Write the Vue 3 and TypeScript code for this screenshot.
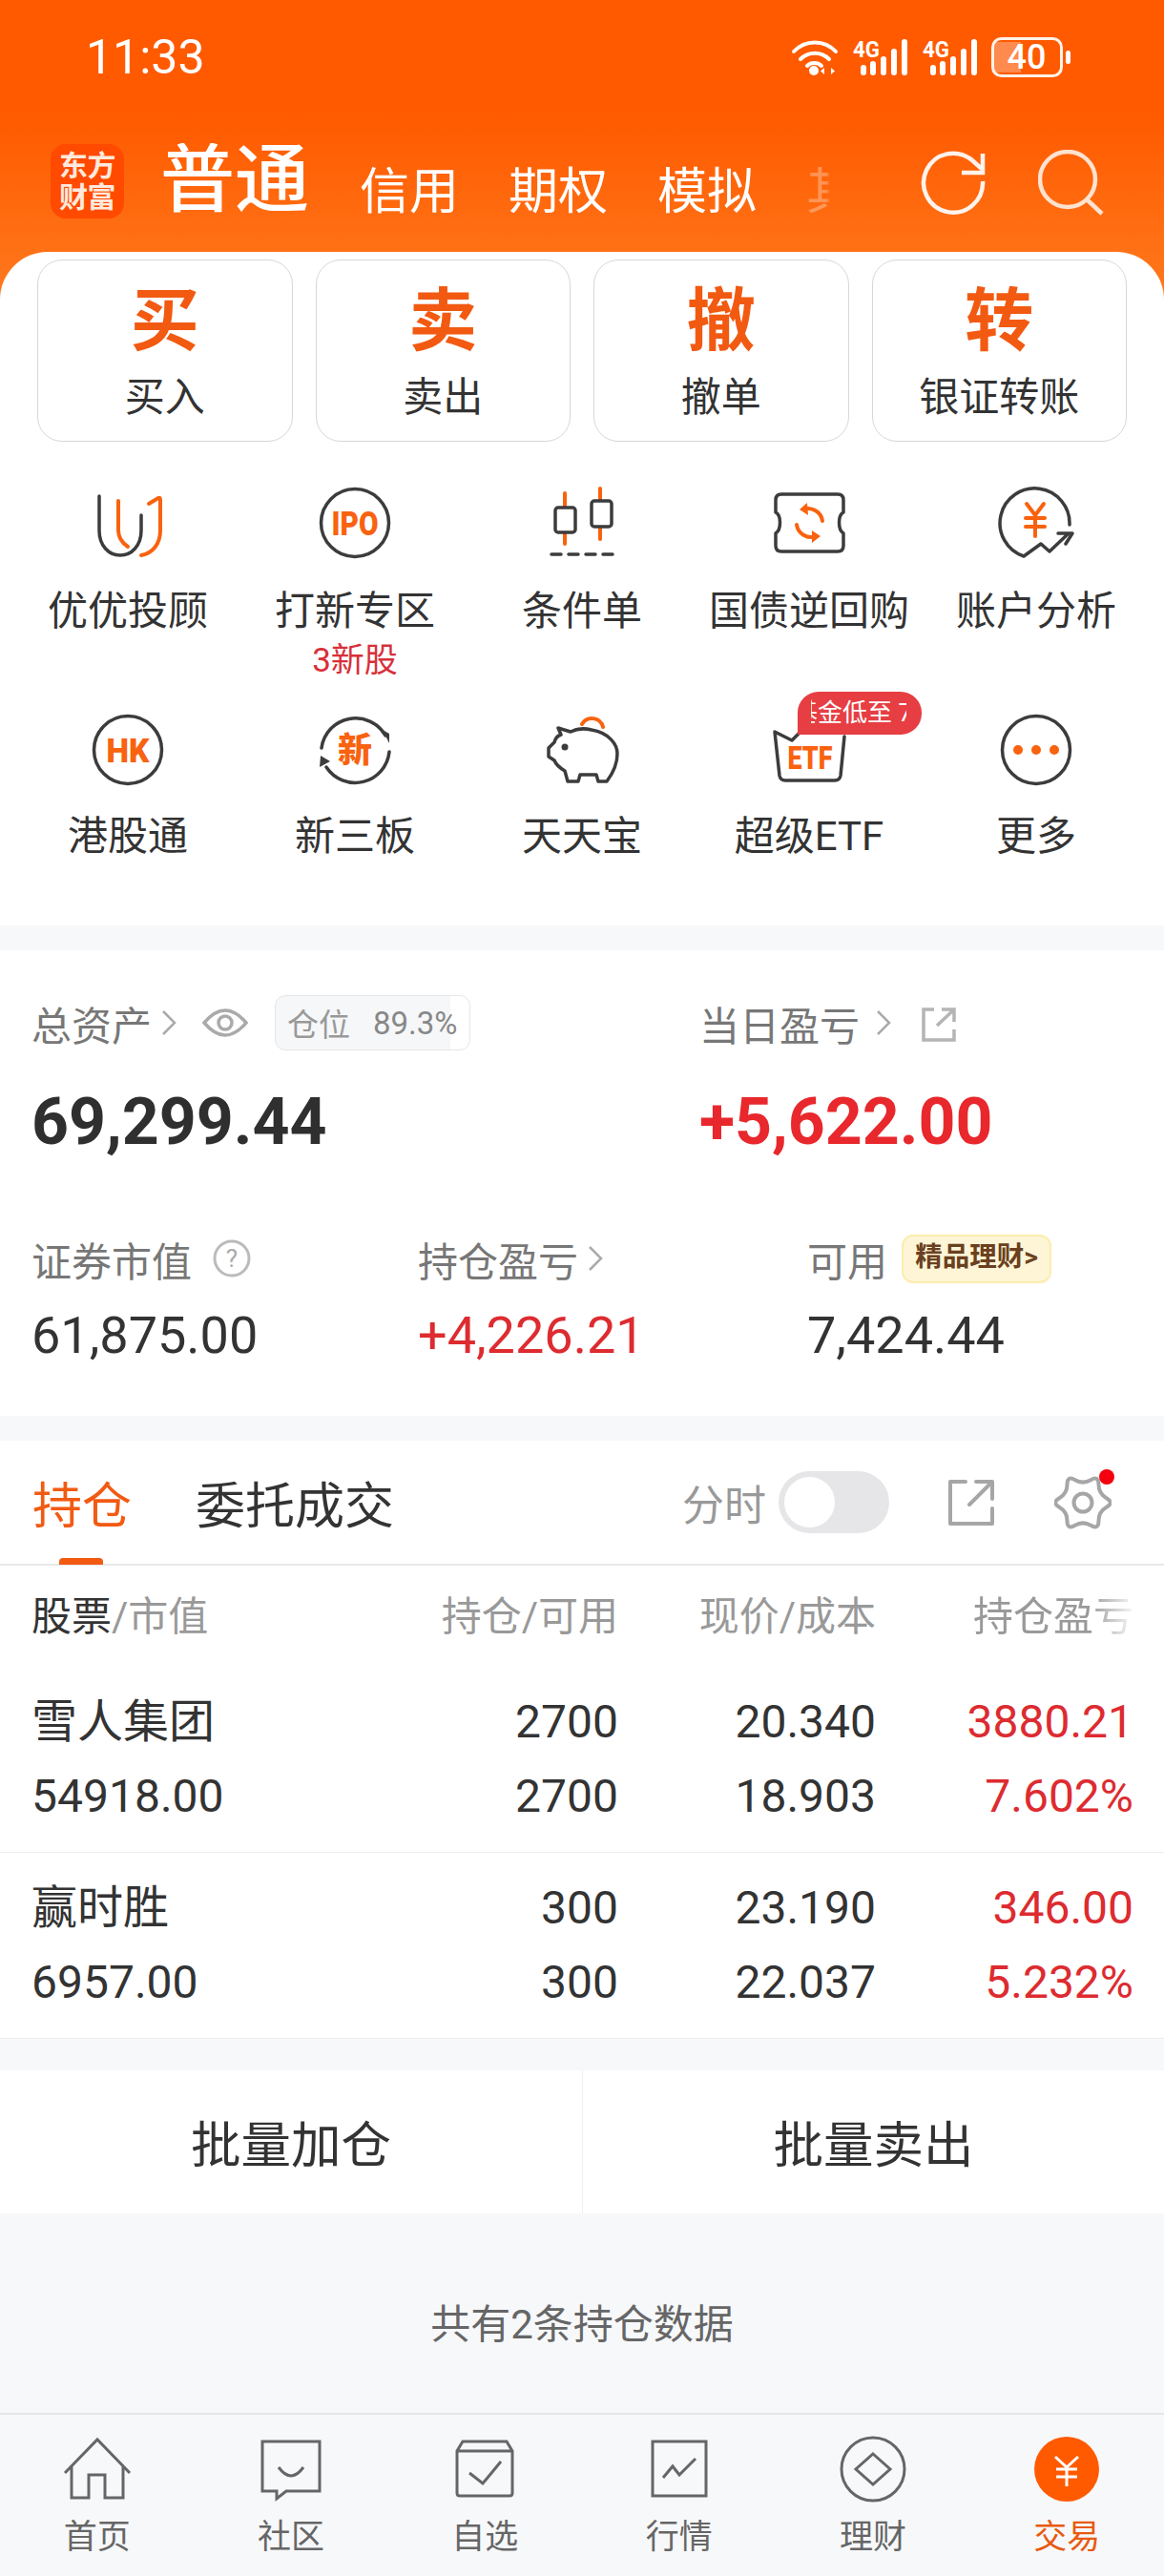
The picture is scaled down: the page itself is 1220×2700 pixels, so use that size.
<script setup lang="ts">
const actions = [
  { big: '买', label: '买入' },
  { big: '卖', label: '卖出' },
  { big: '撤', label: '撤单' },
  { big: '转', label: '银证转账' },
]
const tabs = ['信用', '期权', '模拟', '其他']
const rows = [
  { name: '雪人集团', value: '54918.00', hold: '2700', avail: '2700', price: '20.340', cost: '18.903', pl: '3880.21', pct: '7.602%' },
  { name: '赢时胜', value: '6957.00', hold: '300', avail: '300', price: '23.190', cost: '22.037', pl: '346.00', pct: '5.232%' },
]
</script>

<template>
  <div class="page">
    <header class="hero">
      <div class="status">
        <span class="time">11:33</span>
        <div class="status-icons">
          <svg class="wifi" viewBox="0 0 50 40" width="50" height="40">
            <path d="M3 14 A30 30 0 0 1 47 14 M10 22 A21 21 0 0 1 40 22 M17 29 A11 11 0 0 1 32 29" fill="none" stroke="#fff" stroke-width="4" stroke-linecap="round" />
            <circle cx="24" cy="34" r="5" fill="#fff" />
            <path d="M35 31 V38 L31 34.500 Z M42 31 V38 L46 34.500 Z" fill="#fff" />
          </svg>
          <svg v-for="n in 2" :key="n" class="signal" viewBox="0 0 59 40" width="59" height="40">
            <text x="1" y="20" class="net" textLength="28" lengthAdjust="spacingAndGlyphs">4G</text>
            <rect x="9" y="28" width="6" height="11" rx="3" fill="#fff" />
            <rect x="19" y="24" width="6" height="15" rx="3" fill="#fff" />
            <rect x="30" y="19" width="6" height="20" rx="3" fill="#fff" />
            <rect x="41" y="11" width="6" height="28" rx="3" fill="#fff" />
            <rect x="52" y="1" width="6" height="38" rx="3" fill="#fff" />
          </svg>
          <svg class="battery" viewBox="0 0 84 42" width="84" height="42">
            <rect x="2" y="5" width="29" height="32" fill="#ff8a4d" />
            <rect x="1.500" y="1.500" width="72" height="39" rx="9" fill="none" stroke="#fff3e8" stroke-width="3" />
            <text x="37" y="33" class="batt-num" text-anchor="middle">40</text>
            <rect x="78" y="14" width="5" height="14" rx="2.500" fill="#fff" />
          </svg>
        </div>
      </div>
      <div class="topbar">
        <div class="logo"><span>东方</span><span>财富</span></div>
        <div class="acct-tabs">
          <span class="acct-main">普通</span>
          <span v-for="t in tabs" :key="t" class="acct-tab">{{ t }}</span>
        </div>
        <div class="top-actions">
          <svg viewBox="0 0 70 70" width="70" height="70">
            <path d="M66 33 A31 31 0 1 1 55 11 L65 20" fill="none" stroke="#fff" stroke-opacity=".92" stroke-width="4.500" />
            <path d="M66 4 V24 H44" fill="none" stroke="#fff" stroke-opacity=".92" stroke-width="4.500" />
          </svg>
          <svg viewBox="0 0 70 70" width="70" height="70">
            <circle cx="31" cy="31" r="29" fill="none" stroke="#ffe2d0" stroke-width="4.500" />
            <path d="M51 52 L67 67" fill="none" stroke="#ffe2d0" stroke-width="4.500" />
          </svg>
        </div>
      </div>
    </header>

    <section class="sheet">
      <div class="actions">
        <div v-for="a in actions" :key="a.big" class="action">
          <span class="action-big">{{ a.big }}</span>
          <span class="action-label">{{ a.label }}</span>
        </div>
      </div>

      <div class="shortcuts">
        <div class="cell">
          <svg class="ico" viewBox="0 0 80 80" width="80" height="80">
            <path class="d" d="M10 10 V46 C10 62 20 72 32 72 C44 72 54 62 54 46 V30" />
            <path class="o" d="M30 15 V46 C30 54 34 59 40 63 M62 18 L72 12 Q74 11 74 14 V46 C74 60 66 70 54 72" />
          </svg>
          <span class="cell-label">优优投顾</span>
        </div>
        <div class="cell">
          <svg class="ico" viewBox="0 0 80 80" width="80" height="80">
            <circle class="d" cx="40" cy="38" r="35.500" />
            <text x="40" y="51" class="ico-text" font-size="35" text-anchor="middle" textLength="49" lengthAdjust="spacingAndGlyphs">IPO</text>
          </svg>
          <span class="cell-label">打新专区</span>
          <span class="cell-sub">3新股</span>
        </div>
        <div class="cell">
          <svg class="ico" viewBox="0 0 80 80" width="80" height="80">
            <path class="o" d="M22 7 V60 M59 2 V55" />
            <rect class="d white" x="12" y="22" width="21" height="26" rx="3" />
            <rect class="d white" x="50" y="15" width="21" height="27" rx="3" />
            <path class="d" d="M8 71 H72" stroke-dasharray="10 8" stroke-linecap="butt" />
          </svg>
          <span class="cell-label">条件单</span>
        </div>
        <div class="cell">
          <svg class="ico" viewBox="0 0 80 80" width="80" height="80">
            <path class="d" d="M11 8 H70 Q76 8 76 14 V27 C70 30 70 45 76 49 V62 Q76 68 70 68 H11 Q5 68 5 62 V49 C11 45 11 30 5 27 V14 Q5 8 11 8 Z" />
            <path class="o" d="M54 36 A15 15 0 0 0 34 24 M27 40 A15 15 0 0 0 47 52" />
            <path d="M38 17 L30 24 L39 30 Z M43 46 L52 52 L43 59 Z" fill="#f9620f" />
          </svg>
          <span class="cell-label">国债逆回购</span>
        </div>
        <div class="cell">
          <svg class="ico" viewBox="0 0 80 80" width="80" height="80">
            <path class="d" d="M75 40 A36.500 36.500 0 1 0 27 73 L45 60 L54 68 L74 49 M63 49 H78 L71 60" />
            <path class="o" d="M30 18 L39 30 L48 18 M39 30 V52 M29 33 H49 M29 42 H49" />
          </svg>
          <span class="cell-label">账户分析</span>
        </div>

        <div class="cell">
          <svg class="ico" viewBox="0 0 80 80" width="80" height="80">
            <circle class="d" cx="40" cy="40" r="35.500" />
            <text x="40" y="53" class="ico-text" font-size="35" text-anchor="middle" textLength="45" lengthAdjust="spacingAndGlyphs">HK</text>
          </svg>
          <span class="cell-label">港股通</span>
        </div>
        <div class="cell">
          <svg class="ico" viewBox="0 0 80 80" width="80" height="80">
            <path class="d" d="M5 38 A36 36 0 0 1 72 25 M76 42 A36 36 0 0 1 10 58" />
            <path d="M69 19 L76 23 L76 33 Z M3 58 L4 46 L14 52 Z" fill="#3c3c3c" />
            <text x="40" y="53" class="ico-text" font-size="36" text-anchor="middle">新</text>
          </svg>
          <span class="cell-label">新三板</span>
        </div>
        <div class="cell">
          <svg class="ico" viewBox="0 0 80 80" width="80" height="80">
            <path class="o" d="M40 13 A12 12 0 0 1 62 16" />
            <path class="d" d="M15 17 L28 21 C34 18 42 17 50 19 C68 22 77 34 77 44 C77 55 72 65 66 73 H57 L55 66 H38 L36 73 H25 L22 62 C17 59 13 56 11 51 L5 47 V38 L11 32 C12 28 15 25 18 24 Z" />
            <circle cx="22" cy="37" r="3.500" fill="#3c3c3c" />
          </svg>
          <span class="cell-label">天天宝</span>
        </div>
        <div class="cell">
          <svg class="ico" viewBox="0 0 80 80" width="80" height="80">
            <path class="d" d="M4 21 L9 67 Q10 72 15 72 H67 Q72 72 73 67 L77 26 M4 21 L22 30 L30 22" />
            <text x="41" y="60" class="ico-text" font-size="34" text-anchor="middle" textLength="47" lengthAdjust="spacingAndGlyphs">ETF</text>
          </svg>
          <span class="cell-label">超级ETF</span>
          <div class="promo"><div class="promo-clip"><span>基金低至 7折</span></div></div>
        </div>
        <div class="cell">
          <svg class="ico" viewBox="0 0 80 80" width="80" height="80">
            <circle class="d" cx="40" cy="40" r="35.500" />
            <circle cx="21" cy="40" r="5" fill="#f9620f" />
            <circle cx="40" cy="40" r="5" fill="#f9620f" />
            <circle cx="59" cy="40" r="5" fill="#f9620f" />
          </svg>
          <span class="cell-label">更多</span>
        </div>
      </div>
    </section>

    <section class="assets">
      <div class="asset-top">
        <div class="asset-col">
          <div class="asset-label">
            <span>总资产</span>
            <svg class="chev" viewBox="0 0 16 28" width="16" height="28"><path d="M2 2 L14 14 L2 26" /></svg>
            <svg class="eye" viewBox="0 0 48 34" width="48" height="34">
              <path d="M2 17 Q24 -9 46 17 Q24 43 2 17 Z" />
              <circle cx="24" cy="17" r="7" />
            </svg>
            <div class="ratio"><span>仓位</span><span>89.3%</span></div>
          </div>
          <div class="asset-big">69,299.44</div>
        </div>
        <div class="asset-col">
          <div class="asset-label">
            <span>当日盈亏</span>
            <svg class="chev wide" viewBox="0 0 16 28" width="16" height="28"><path d="M2 2 L14 14 L2 26" /></svg>
            <svg class="ext-small" viewBox="0 0 38 38" width="38" height="38">
              <path d="M14 3 H3 V35 H35 V24 M22 3 H35 V16 M17 20 L34 4" />
            </svg>
          </div>
          <div class="asset-big red">+5,622.00</div>
        </div>
      </div>
      <div class="asset-bottom">
        <div>
          <div class="asset-label2">
            <span>证券市值</span>
            <svg class="help" viewBox="0 0 40 40" width="40" height="40">
              <circle cx="20" cy="20" r="18" />
              <text x="20" y="29" text-anchor="middle">?</text>
            </svg>
          </div>
          <div class="asset-num">61,875.00</div>
        </div>
        <div>
          <div class="asset-label2">
            <span>持仓盈亏</span>
            <svg class="chev" viewBox="0 0 16 28" width="16" height="28"><path d="M2 2 L14 14 L2 26" /></svg>
          </div>
          <div class="asset-num red2">+4,226.21</div>
        </div>
        <div>
          <div class="asset-label2">
            <span>可用</span>
            <span class="gold">精品理财&gt;</span>
          </div>
          <div class="asset-num">7,424.44</div>
        </div>
      </div>
    </section>

    <section class="positions">
      <div class="pos-tabs">
        <span class="pos-tab active">持仓</span>
        <span class="pos-tab">委托成交</span>
        <div class="pos-tools">
          <span class="fenshi">分时</span>
          <div class="toggle"><i></i></div>
          <svg class="ext" viewBox="0 0 48 48" width="48" height="48">
            <path d="M18 2 H2 V46 H46 V30 M29 2 H46 V20 M22 26 L45 3" />
          </svg>
          <div class="gear-wrap">
            <svg class="gear" viewBox="0 0 60 60" width="60" height="60">
              <path d="M54.700 34.750 Q63 30 54.700 25.250 Q46.450 20.500 46.500 10.960 Q46.500 1.420 38.250 6.210 Q30 11 21.750 6.210 Q13.500 1.420 13.500 10.960 Q13.550 20.500 5.300 25.250 Q-3 30 5.300 34.750 Q13.550 39.500 13.500 49.040 Q13.500 58.580 21.750 53.790 Q30 49 38.250 53.790 Q46.500 58.580 46.500 49.040 Q46.450 39.500 54.700 34.750 Z" />
              <circle cx="30" cy="30" r="9.500" />
            </svg>
            <i class="dot"></i>
          </div>
        </div>
      </div>
      <div class="t-head">
        <span><b>股票</b>/市值</span>
        <span>持仓/可用</span>
        <span>现价/成本</span>
        <span class="fade">持仓盈亏</span>
      </div>
      <div v-for="r in rows" :key="r.name" class="t-row">
        <div class="left"><span>{{ r.name }}</span><span>{{ r.value }}</span></div>
        <div><span>{{ r.hold }}</span><span>{{ r.avail }}</span></div>
        <div><span>{{ r.price }}</span><span>{{ r.cost }}</span></div>
        <div class="pl"><span>{{ r.pl }}</span><span>{{ r.pct }}</span></div>
      </div>
    </section>

    <section class="batch">
      <span>批量加仓</span>
      <span>批量卖出</span>
    </section>

    <section class="count">共有2条持仓数据</section>

    <nav class="nav">
      <div class="nav-item">
        <svg viewBox="0 0 80 76" width="80" height="76">
          <path d="M6 42 L40 7 L74 42 M13 34 V68 H31 V44 H48 V68 H67 V34" />
        </svg>
        <span>首页</span>
      </div>
      <div class="nav-item">
        <svg viewBox="0 0 80 76" width="80" height="76">
          <path d="M10 9 H70 V61 H35 L25 69 V61 H10 Z M27 36 Q40 54 53 36" />
        </svg>
        <span>社区</span>
      </div>
      <div class="nav-item">
        <svg viewBox="0 0 80 76" width="80" height="76">
          <path d="M17 9 H63 L69 19 V63 Q69 66 66 66 H14 Q11 66 11 63 V19 Z M11 19 H69 M24 42 L38 53 L57 30" />
        </svg>
        <span>自选</span>
      </div>
      <div class="nav-item">
        <svg viewBox="0 0 80 76" width="80" height="76">
          <path d="M12 9 H68 V66 H12 Z M23 47 L33 35 L40 44 L57 27" />
        </svg>
        <span>行情</span>
      </div>
      <div class="nav-item">
        <svg viewBox="0 0 80 76" width="80" height="76">
          <circle cx="40" cy="38" r="33" />
          <path d="M40 22 L58 38 L40 54 L22 38 Z" />
        </svg>
        <span>理财</span>
      </div>
      <div class="nav-item active">
        <svg viewBox="0 0 80 76" width="80" height="76">
          <circle class="fill" cx="40" cy="38" r="34" />
          <path class="yen" d="M28 25 L40 36 L52 25 M29 38 H51 M29 46 H51 M40 36 V56" />
        </svg>
        <span>交易</span>
      </div>
    </nav>
  </div>
</template>

<style scoped>
.page {
  width: 1220px;
  height: 2700px;
  overflow: hidden;
  background: #f7f8fa;
  font-family: Roboto, "Noto Sans CJK SC", sans-serif;
  color: #333;
  display: flex;
  flex-direction: column;
}

.hero {
  height: 320px;
  margin-bottom: -56px;
  background: linear-gradient(180deg, #ff5a00 0, #ff5a00 120px, #ff7a1e 320px);
  color: #fff;
  box-sizing: border-box;
}
.status {
  height: 120px;
  display: flex;
  align-items: center;
  justify-content: space-between;
  padding: 0 97px 0 90px;
}
.time {
  font-size: 50px;
  color: #fff;
}
.status-icons {
  display: flex;
  align-items: center;
  gap: 14px;
}
.signal {
  overflow: visible;
}
.net {
  font: 700 23px Roboto, sans-serif;
  fill: #fff;
}
.batt-num {
  font: 500 36px Roboto, sans-serif;
  fill: #fff;
}

.topbar {
  margin-top: 30px;
  height: 80px;
  display: flex;
  align-items: center;
  padding: 0 62px 0 53px;
}
.logo {
  width: 77px;
  height: 78px;
  border-radius: 16px;
  background: #ff4a00;
  display: flex;
  flex-direction: column;
  align-items: center;
  justify-content: center;
  font-size: 30px;
  line-height: 33px;
  font-weight: 700;
  letter-spacing: -0.5px;
  color: #ffe9dc;
}
.acct-tabs {
  margin-left: 38px;
  width: 716px;
  height: 80px;
  display: flex;
  align-items: flex-end;
  gap: 52px;
  white-space: nowrap;
  -webkit-mask-image: linear-gradient(90deg, #000 0, #000 650px, rgba(0, 0, 0, .3) 680px, rgba(0, 0, 0, .3) 698px, transparent 702px);
  mask-image: linear-gradient(90deg, #000 0, #000 650px, rgba(0, 0, 0, .3) 680px, rgba(0, 0, 0, .3) 698px, transparent 702px);
}
.acct-main {
  flex: none;
  font-size: 78px;
  line-height: 80px;
  font-weight: 500;
  color: #fff;
  margin-right: 1px;
}
.acct-tab {
  flex: none;
  font-size: 52px;
  line-height: 56px;
  color: #fff;
}
.top-actions {
  margin-left: auto;
  padding-top: 4px;
  display: flex;
  align-items: center;
  gap: 54px;
}

.sheet {
  position: relative;
  background: #fff;
  border-radius: 50px 50px 0 0;
  height: 706px;
  box-sizing: border-box;
  padding-top: 8px;
}
.actions {
  display: grid;
  grid-template-columns: repeat(4, 1fr);
  gap: 24px;
  padding: 0 39px;
}
.action {
  height: 191px;
  box-sizing: border-box;
  border: 1.5px solid #d8d8d8;
  border-radius: 26px;
  display: flex;
  flex-direction: column;
  align-items: center;
  padding-top: 24px;
}
.action-big {
  font-size: 72px;
  line-height: 80px;
  font-weight: 700;
  color: #f25a12;
}
.action-label {
  margin-top: 15px;
  font-size: 42px;
  line-height: 50px;
  color: #333;
}

.shortcuts {
  margin-top: 47px;
  padding: 0 15px;
  display: grid;
  grid-template-columns: repeat(5, 1fr);
  grid-auto-rows: 236px;
}
.cell {
  position: relative;
  display: flex;
  flex-direction: column;
  align-items: center;
}
.ico {
  flex: none;
}
.ico .d,
.ico .o {
  fill: none;
  stroke-width: 3.500;
  stroke-linecap: round;
  stroke-linejoin: round;
}
.ico .d {
  stroke: #3c3c3c;
}
.ico .o {
  stroke: #f9620f;
  stroke-width: 4;
}
.ico .d.white {
  fill: #fff;
}
.ico-text {
  font-family: Roboto, "Noto Sans CJK SC", sans-serif;
  font-weight: 900;
  fill: #f9620f;
}
.cell-label {
  margin-top: 27px;
  font-size: 42px;
  line-height: 48px;
  white-space: nowrap;
  color: #333;
}
.cell-sub {
  margin-top: 8px;
  font-size: 35px;
  line-height: 40px;
  color: #d8303a;
}
.promo {
  position: absolute;
  left: 107px;
  top: -21px;
  width: 130px;
  height: 45px;
  border-radius: 22px 22px 22px 0;
  background: #e63e43;
  box-sizing: border-box;
  padding: 0 16px 0 14px;
  color: #fff;
  font-size: 26px;
  line-height: 44px;
  white-space: nowrap;
}
.promo-clip {
  overflow: hidden;
}
.promo-clip span {
  display: block;
  margin-left: -19px;
}

.assets {
  margin-top: 26px;
  height: 488px;
  background: #fff;
  padding: 47px 33px 0;
  box-sizing: border-box;
}
.asset-top {
  display: grid;
  grid-template-columns: 700px 1fr;
}
.asset-label {
  height: 58px;
  display: flex;
  align-items: center;
  font-size: 42px;
  color: #777;
}
.chev {
  flex: none;
  margin-left: 10px;
}
.chev.wide {
  margin-left: 17px;
}
.chev path {
  fill: none;
  stroke: #aaa;
  stroke-width: 2.500;
}
.eye {
  margin-left: 27px;
}
.eye path,
.eye circle {
  fill: none;
  stroke: #aaa;
  stroke-width: 3.500;
}
.ratio {
  margin-left: 28px;
  width: 205px;
  height: 58px;
  box-sizing: border-box;
  border: 1.5px solid #e6e6e8;
  border-radius: 11px;
  background: linear-gradient(90deg, #f6f7f9 0, #f6f7f9 90%, #fff 90%);
  display: flex;
  align-items: center;
  padding-left: 12px;
  gap: 24px;
  font-size: 33px;
  color: #999;
}
.ratio span:last-child {
  color: #888;
}
.ext-small {
  margin: 4px 0 0 31px;
}
.ext-small path {
  fill: none;
  stroke: #b4b4b4;
  stroke-width: 3.500;
}
.asset-big {
  margin-top: 35px;
  font-size: 68px;
  line-height: 80px;
  font-weight: 700;
  color: #2f2f2f;
}
.asset-big.red {
  color: #e8282c;
}
.asset-bottom {
  margin-top: 77px;
  display: grid;
  grid-template-columns: 405px 408px 1fr;
}
.asset-label2 {
  height: 52px;
  display: flex;
  align-items: center;
  font-size: 42px;
  color: #777;
}
.help {
  margin-left: 22px;
}
.help circle {
  fill: none;
  stroke: #bbb;
  stroke-width: 3;
}
.help text {
  font: 400 26px Roboto, sans-serif;
  fill: #aaa;
}
.gold {
  margin-left: 15px;
  width: 157px;
  height: 51px;
  box-sizing: border-box;
  border-radius: 12px;
  background: #fdf5d6;
  border: 2px solid #fcedae;
  color: #6a4020;
  font-size: 28.500px;
  font-weight: 700;
  line-height: 44px;
  text-align: center;
  white-space: nowrap;
}
.asset-num {
  margin-top: 23px;
  font-size: 54px;
  line-height: 64px;
  color: #333;
}
.asset-num.red2 {
  color: #dd2b30;
}

.positions {
  margin-top: 26px;
  height: 627px;
  background: #fff;
}
.pos-tabs {
  height: 131px;
  box-sizing: border-box;
  border-bottom: 2px solid #e8e8e8;
  padding: 0 55px 0 34px;
  display: flex;
  align-items: center;
}
.pos-tab {
  position: relative;
  align-self: stretch;
  display: flex;
  align-items: center;
  font-size: 52px;
  color: #333;
  margin-right: 67px;
}
.pos-tab.active {
  color: #f25a12;
}
.pos-tab.active::after {
  content: "";
  position: absolute;
  left: 28px;
  bottom: -1px;
  width: 46px;
  height: 7px;
  border-radius: 4px 4px 0 0;
  background: #f25a12;
}
.pos-tools {
  margin-left: auto;
  display: flex;
  align-items: center;
}
.fenshi {
  font-size: 44px;
  color: #999;
}
.toggle {
  margin-left: 13px;
  width: 116px;
  height: 65px;
  border-radius: 33px;
  background: #e6e6e8;
  padding: 6px;
  box-sizing: border-box;
}
.toggle i {
  display: block;
  width: 53px;
  height: 53px;
  border-radius: 50%;
  background: #fff;
}
.ext {
  margin-left: 62px;
}
.ext path {
  fill: none;
  stroke: #a6a6a6;
  stroke-width: 4;
  stroke-linejoin: round;
  stroke-linecap: round;
}
.gear-wrap {
  position: relative;
  margin-left: 63px;
  width: 60px;
  height: 60px;
}
.gear {
  display: block;
}
.gear path,
.gear circle {
  fill: none;
  stroke: #a6a6a6;
  stroke-width: 4;
  stroke-linejoin: round;
}
.dot {
  position: absolute;
  right: -3px;
  top: -5px;
  width: 16px;
  height: 16px;
  border-radius: 50%;
  background: #f4000f;
}

.t-head,
.t-row {
  display: grid;
  grid-template-columns: 345px 270px 270px 270px;
  padding: 0 32px 0 33px;
}
.t-head {
  height: 106px;
  padding-bottom: 8px;
  box-sizing: border-box;
  align-items: center;
  font-size: 42px;
  color: #999;
  text-align: right;
}
.t-head span:first-child {
  text-align: left;
}
.t-head b {
  font-weight: 400;
  color: #333;
}
.t-head .fade {
  -webkit-mask-image: linear-gradient(90deg, #000 0, #000 72%, rgba(0, 0, 0, .08) 100%);
  mask-image: linear-gradient(90deg, #000 0, #000 72%, rgba(0, 0, 0, .08) 100%);
  justify-self: end;
}
.t-row {
  height: 195px;
  box-sizing: border-box;
  padding-top: 19px;
  border-bottom: 1.5px solid #eeeeee;
  font-size: 48px;
  line-height: 78px;
  text-align: right;
  color: #333;
}
.t-row > div {
  display: flex;
  flex-direction: column;
}
.t-row .left {
  text-align: left;
}
.t-row .pl {
  color: #dd2b30;
}

.batch {
  margin-top: 33px;
  height: 150px;
  background: #fff;
  display: grid;
  grid-template-columns: 1fr 1fr;
  align-items: stretch;
  font-size: 52.500px;
  color: #333;
}
.batch span {
  display: flex;
  align-items: center;
  justify-content: center;
  padding-bottom: 2px;
}
.batch span + span {
  border-left: 1px solid #f0f0f0;
}

.count {
  height: 209px;
  box-sizing: border-box;
  padding-top: 90px;
  font-size: 42px;
  line-height: 54px;
  text-align: center;
  color: #666;
}

.nav {
  flex: 1;
  border-top: 2px solid #e6e6e9;
  display: grid;
  grid-template-columns: repeat(6, 1fr);
  padding-top: 19px;
}
.nav-item {
  display: flex;
  flex-direction: column;
  align-items: center;
  font-size: 35px;
  line-height: 44px;
  color: #666;
}
.nav-item svg {
  margin-bottom: 12px;
}
.nav-item svg path,
.nav-item svg circle {
  fill: none;
  stroke: #666;
  stroke-width: 3;
}
.nav-item.active {
  color: #e85a10;
}
.nav-item svg .fill {
  fill: #ff5a00;
  stroke: none;
}
.nav-item svg .yen {
  stroke: #fff;
}
</style>

<style>
html,
body {
  margin: 0;
  padding: 0;
}
</style>
